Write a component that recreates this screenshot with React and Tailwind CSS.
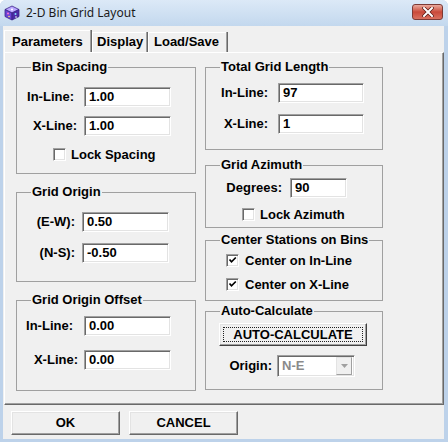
import React from "react";

function Input({ value, className }) {
  return (
    <div
      className={
        "h-[20px] bg-white border border-t-[#a0a0a0] border-l-[#a0a0a0] border-b-[#ffffff] border-r-[#ffffff] shadow-[inset_1px_1px_0_#696969,inset_-1px_-1px_0_#e3e3e3] flex items-center pl-[4px] text-[13px] font-bold text-black " +
        className
      }
    >
      {value}
    </div>
  );
}

function Check({ checked }) {
  return (
    <div className="w-[13px] h-[13px] flex-none bg-white border border-t-[#a0a0a0] border-l-[#a0a0a0] border-b-[#ffffff] border-r-[#ffffff] shadow-[inset_1px_1px_0_#696969,inset_-1px_-1px_0_#e3e3e3] flex items-center justify-center">
      {checked && (
        <svg width="9" height="9" viewBox="0 0 9 9">
          <path d="M1.5 3.5 L3.5 5.8 L7.8 1.5" stroke="#000" strokeWidth="1.7" fill="none" />
        </svg>
      )}
    </div>
  );
}

function Legend({ children }) {
  return (
    <legend className="ml-[14px] px-[1px] text-[13px] font-bold leading-[16px] text-black">
      {children}
    </legend>
  );
}

function Label({ children, className }) {
  return (
    <div className={"text-right text-[13px] font-bold text-black flex-none " + className}>
      {children}
    </div>
  );
}

function AppIcon() {
  return (
    <svg width="16" height="16" viewBox="0 0 16 16">
      <path d="M8 1 L15 4.5 L8 8 L1 4.5 Z" fill="#b9a6ff" stroke="#3b2387" strokeWidth="0.8" />
      <path d="M1 4.5 L8 8 L8 15 L1 11.5 Z" fill="#6b44d6" stroke="#3b2387" strokeWidth="0.8" />
      <path d="M15 4.5 L8 8 L8 15 L15 11.5 Z" fill="#4b2aa6" stroke="#3b2387" strokeWidth="0.8" />
      <circle cx="8" cy="4.5" r="1" fill="#ffffff" />
      <circle cx="4" cy="8.5" r="1" fill="#ff6fd0" />
      <circle cx="11.5" cy="9" r="1" fill="#7fe0ff" />
      <circle cx="5" cy="11.5" r="0.8" fill="#ffe36b" />
      <circle cx="12" cy="12" r="0.8" fill="#ffffff" />
    </svg>
  );
}

function Tab({ children, className }) {
  return (
    <div
      className={
        "border-r border-r-[#696969] shadow-[inset_-1px_0_0_#a0a0a0,inset_1px_1px_0_#ffffff] text-[13px] font-bold leading-[16px] text-black " +
        className
      }
    >
      {children}
    </div>
  );
}

function RaisedButton({ children, className }) {
  return (
    <div
      className={
        "border border-t-[#ffffff] border-l-[#ffffff] border-r-[#696969] border-b-[#696969] shadow-[inset_-1px_-1px_0_#a0a0a0,inset_1px_1px_0_#e3e3e3] flex items-center justify-center text-[13px] font-bold text-black " +
        className
      }
    >
      {children}
    </div>
  );
}

export default function App() {
  return (
    <div className="w-[448px] h-[442px] flex flex-col bg-[#bdd2ea] rounded-t-[6px] overflow-hidden font-['Liberation_Sans',Arial,sans-serif]">
      {/* Title bar */}
      <div className="h-[26px] flex-none flex items-center pl-[4px] bg-linear-to-b from-[#dce9f7] to-[#c3d8ee]">
        <AppIcon />
        <div className="ml-[6px] text-[12px] text-[#1b1b1b] font-['Noto_Sans',sans-serif]">2-D Bin Grid Layout</div>
        <div className="ml-auto mr-[5px] self-start mt-[4px] w-[31px] h-[16px] rounded-[3px] border border-[#7c3a35] bg-linear-to-b from-[#e9a99d] via-[#c9493a] to-[#d9705f] flex items-center justify-center">
          <svg width="12" height="10" viewBox="0 0 12 10">
            <path d="M2 1 L10 9 M10 1 L2 9" stroke="#5a1a14" strokeWidth="3.4" strokeLinecap="square" />
            <path d="M2 1 L10 9 M10 1 L2 9" stroke="#ffffff" strokeWidth="2" strokeLinecap="square" />
          </svg>
        </div>
      </div>

      {/* Body */}
      <div className="ml-[3px] mr-[4px] h-[413px] flex-none bg-[#f0f0f0] flex flex-col">
        {/* Tabs */}
        <div className="h-[26px] flex-none flex items-end pl-[1px]">
          <Tab className="h-[22px] w-[88px] pl-[8px] pt-[4px]">Parameters</Tab>
          <Tab className="h-[20px] w-[56px] pl-[5px] pt-[2px]">Display</Tab>
          <Tab className="h-[20px] w-[80px] pl-[6px] pt-[2px]">Load/Save</Tab>
        </div>

        {/* Panel */}
        <div className="ml-[1px] w-[440px] h-[353px] flex-none border border-t-[#ffffff] border-l-[#ffffff] border-r-[#696969] border-b-[#696969] shadow-[inset_-1px_-1px_0_#a0a0a0] pt-[6px] pl-[11px] flex gap-[9px]">
          {/* Left column */}
          <div className="w-[180px] flex-none flex flex-col">
            <fieldset className="border border-[#a0a0a0] h-[115px] flex-none">
              <Legend>Bin Spacing</Legend>
              <div className="mt-[12px] flex items-center">
                <Label className="w-[67px] pr-[10px]">In-Line:</Label>
                <Input value="1.00" className="w-[87px]" />
              </div>
              <div className="mt-[9px] flex items-center">
                <Label className="w-[67px] pr-[7px]">X-Line:</Label>
                <Input value="1.00" className="w-[87px]" />
              </div>
              <div className="mt-[12px] h-[13px] pl-[36px] flex items-center gap-[5px]">
                <Check />
                <span className="text-[13px] font-bold text-black">Lock Spacing</span>
              </div>
            </fieldset>

            <fieldset className="mt-[10px] border border-[#a0a0a0] h-[98px] flex-none">
              <Legend>Grid Origin</Legend>
              <div className="mt-[12px] flex items-center">
                <Label className="w-[65px] pr-[7px]">(E-W):</Label>
                <Input value="0.50" className="w-[87px]" />
              </div>
              <div className="mt-[11px] flex items-center">
                <Label className="w-[65px] pr-[7px]">(N-S):</Label>
                <Input value="-0.50" className="w-[87px]" />
              </div>
            </fieldset>

            <fieldset className="mt-[10px] border border-[#a0a0a0] h-[99px] flex-none">
              <Legend>Grid Origin Offset</Legend>
              <div className="mt-[8px] flex items-center">
                <Label className="w-[67px] pr-[11px]">In-Line:</Label>
                <Input value="0.00" className="w-[87px]" />
              </div>
              <div className="mt-[14px] flex items-center">
                <Label className="w-[67px] pr-[6px]">X-Line:</Label>
                <Input value="0.00" className="w-[87px]" />
              </div>
            </fieldset>
          </div>

          {/* Right column */}
          <div className="w-[178px] flex-none flex flex-col">
            <fieldset className="border border-[#a0a0a0] h-[91px] flex-none">
              <Legend>Total Grid Length</Legend>
              <div className="mt-[8px] flex items-center">
                <Label className="w-[72px] pr-[10px]">In-Line:</Label>
                <Input value="97" className="w-[86px]" />
              </div>
              <div className="mt-[11px] flex items-center">
                <Label className="w-[72px] pr-[10px]">X-Line:</Label>
                <Input value="1" className="w-[86px]" />
              </div>
            </fieldset>

            <fieldset className="mt-[7px] border border-[#a0a0a0] h-[71px] flex-none">
              <Legend>Grid Azimuth</Legend>
              <div className="mt-[5px] flex items-center">
                <Label className="w-[84px] pr-[8px]">Degrees:</Label>
                <Input value="90" className="w-[57px]" />
              </div>
              <div className="mt-[10px] h-[13px] pl-[36px] flex items-center gap-[5px]">
                <Check />
                <span className="text-[13px] font-bold text-black">Lock Azimuth</span>
              </div>
            </fieldset>

            <fieldset className="mt-[4px] border border-[#a0a0a0] h-[69px] flex-none">
              <Legend>Center Stations on Bins</Legend>
              <div className="mt-[6px] h-[13px] pl-[20px] flex items-center gap-[6px]">
                <Check checked />
                <span className="text-[13px] font-bold text-black">Center on In-Line</span>
              </div>
              <div className="mt-[11px] h-[13px] pl-[20px] flex items-center gap-[6px]">
                <Check checked />
                <span className="text-[13px] font-bold text-black">Center on X-Line</span>
              </div>
            </fieldset>

            <fieldset className="mt-[2px] border border-[#a0a0a0] h-[87px] flex-none">
              <Legend>Auto-Calculate</Legend>
              <div className="mt-[4px] ml-[13px] w-[148px] h-[23px] border border-t-[#ffffff] border-l-[#ffffff] border-r-[#404040] border-b-[#404040] shadow-[inset_-1px_-1px_0_#a0a0a0,inset_1px_1px_0_#e3e3e3] p-[3px]">
                <div className="w-full h-full border border-dotted border-[#202020] flex items-center justify-center text-[13px] font-bold text-black">
                  AUTO-CALCULATE
                </div>
              </div>
              <div className="mt-[9px] flex items-center">
                <Label className="w-[71px] pr-[5px]">Origin:</Label>
                <div className="w-[78px] h-[22px] bg-white border border-t-[#a0a0a0] border-l-[#a0a0a0] border-b-[#ffffff] border-r-[#ffffff] shadow-[inset_1px_1px_0_#696969,inset_-1px_-1px_0_#e3e3e3] flex items-center pl-[4px] pr-[2px]">
                  <span className="flex-1 text-[13px] font-bold text-[#8a8a8a]">N-E</span>
                  <div className="w-[16px] h-[18px] bg-[#f0f0f0] border border-t-[#e3e3e3] border-l-[#e3e3e3] border-r-[#a0a0a0] border-b-[#a0a0a0] flex items-center justify-center">
                    <svg width="7" height="4" viewBox="0 0 7 4">
                      <path d="M0 0 L7 0 L3.5 4 Z" fill="#a0a0a0" />
                    </svg>
                  </div>
                </div>
              </div>
            </fieldset>
          </div>
        </div>

        {/* Bottom buttons */}
        <div className="mt-[6px] ml-[8px] flex gap-[9px]">
          <RaisedButton className="w-[109px] h-[24px]">OK</RaisedButton>
          <RaisedButton className="w-[109px] h-[24px]">CANCEL</RaisedButton>
        </div>
      </div>
    </div>
  );
}
